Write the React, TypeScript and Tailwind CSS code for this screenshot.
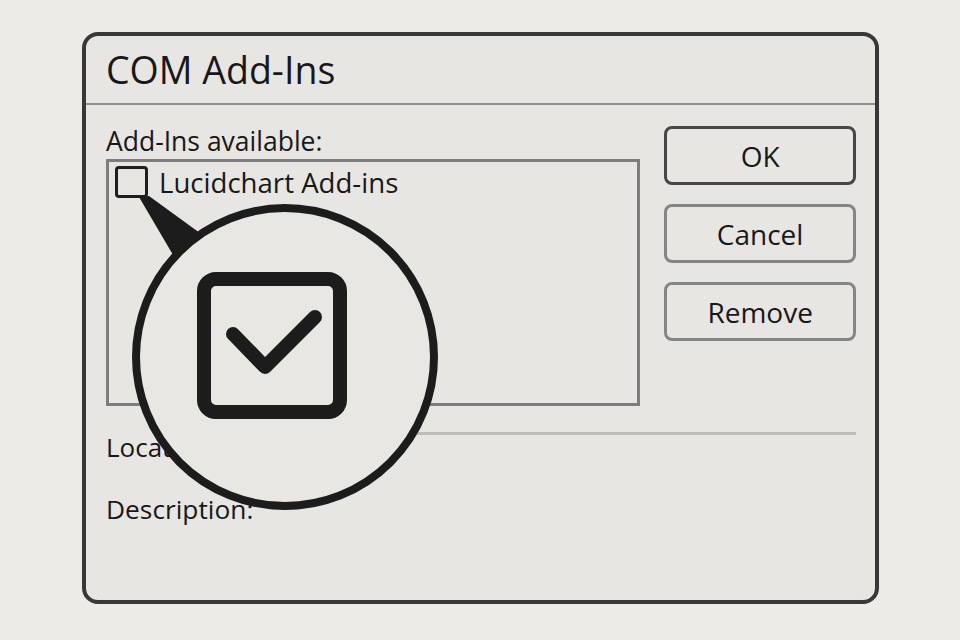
import React from "react";

const buttons = [
  { label: "OK", primary: true },
  { label: "Cancel", primary: false },
  { label: "Remove", primary: false },
];

function Magnifier() {
  // zoom callout over the list: wedge from the small box, circle, big checked box
  return (
    <svg
      className="pointer-events-none absolute left-0 top-0"
      width={960}
      height={640}
      viewBox="0 0 960 640"
    >
      <polygon points="139,197 149,196 204,236 176,260" fill="#1c1c1c" />
      <circle cx={285} cy={357} r={149} fill="#e8e7e3" stroke="#1c1c1c" strokeWidth={8} />
      <rect
        x={204}
        y={279}
        width={136}
        height={133}
        rx={12}
        fill="none"
        stroke="#1c1c1c"
        strokeWidth={14}
      />
      <path
        d="M233 334 L265 367 L315 317"
        fill="none"
        stroke="#1c1c1c"
        strokeWidth={14}
        strokeLinecap="round"
        strokeLinejoin="round"
      />
    </svg>
  );
}

export default function App() {
  return (
    <div className="relative h-[640px] w-[960px] overflow-hidden bg-[#ecebe7] pl-[82px] pt-[32px] font-['Open_Sans',sans-serif] text-[#181818]">
      <div className="flex h-[572px] w-[797px] flex-col rounded-[16px] border-4 border-[#383838] bg-[#e7e6e2]">
        <div className="flex h-[69px] items-center border-b-2 border-[#8f8f8f] pl-[20px] text-[37.5px] leading-none">
          COM Add-Ins
        </div>

        <div className="flex gap-[24px] pl-[20px] pr-[19px]">
          <div className="w-[535px]">
            <p className="mt-[18px] text-[26.5px] leading-[36px]">Add-Ins available:</p>
            <div className="h-[247px] border-[3px] border-[#7d7d7d] pl-[6px] pt-[4px]">
              <div className="flex items-center gap-[11px]">
                <span className="h-[32px] w-[33px] rounded-[4px] border-[3.5px] border-[#1e1e1e]" />
                <span className="text-[27.6px] leading-[32px]">Lucidchart Add-ins</span>
              </div>
            </div>
          </div>
          <div className="flex w-[192px] flex-col gap-[19px] pt-[21px]">
            {buttons.map((b) => (
              <button
                key={b.label}
                type="button"
                className={
                  b.primary
                    ? "h-[59px] rounded-[8px] border-[3px] border-[#474747] text-[28px]"
                    : "h-[59px] rounded-[8px] border-[3px] border-[#858585] text-[28px]"
                }
              >
                {b.label}
              </button>
            ))}
          </div>
        </div>

        <div className="pl-[20px] pr-[19px]">
          <div className="mt-[26px] flex items-start gap-[8px]">
            <span className="mt-[-3px] text-[26px] leading-[36px]">Location:</span>
            <div className="h-[3px] flex-1 bg-[#bdbcb8]" />
          </div>
          <p className="mt-[26px] text-[26.3px] leading-[36px]">Description:</p>
        </div>
      </div>
      <Magnifier />
    </div>
  );
}
